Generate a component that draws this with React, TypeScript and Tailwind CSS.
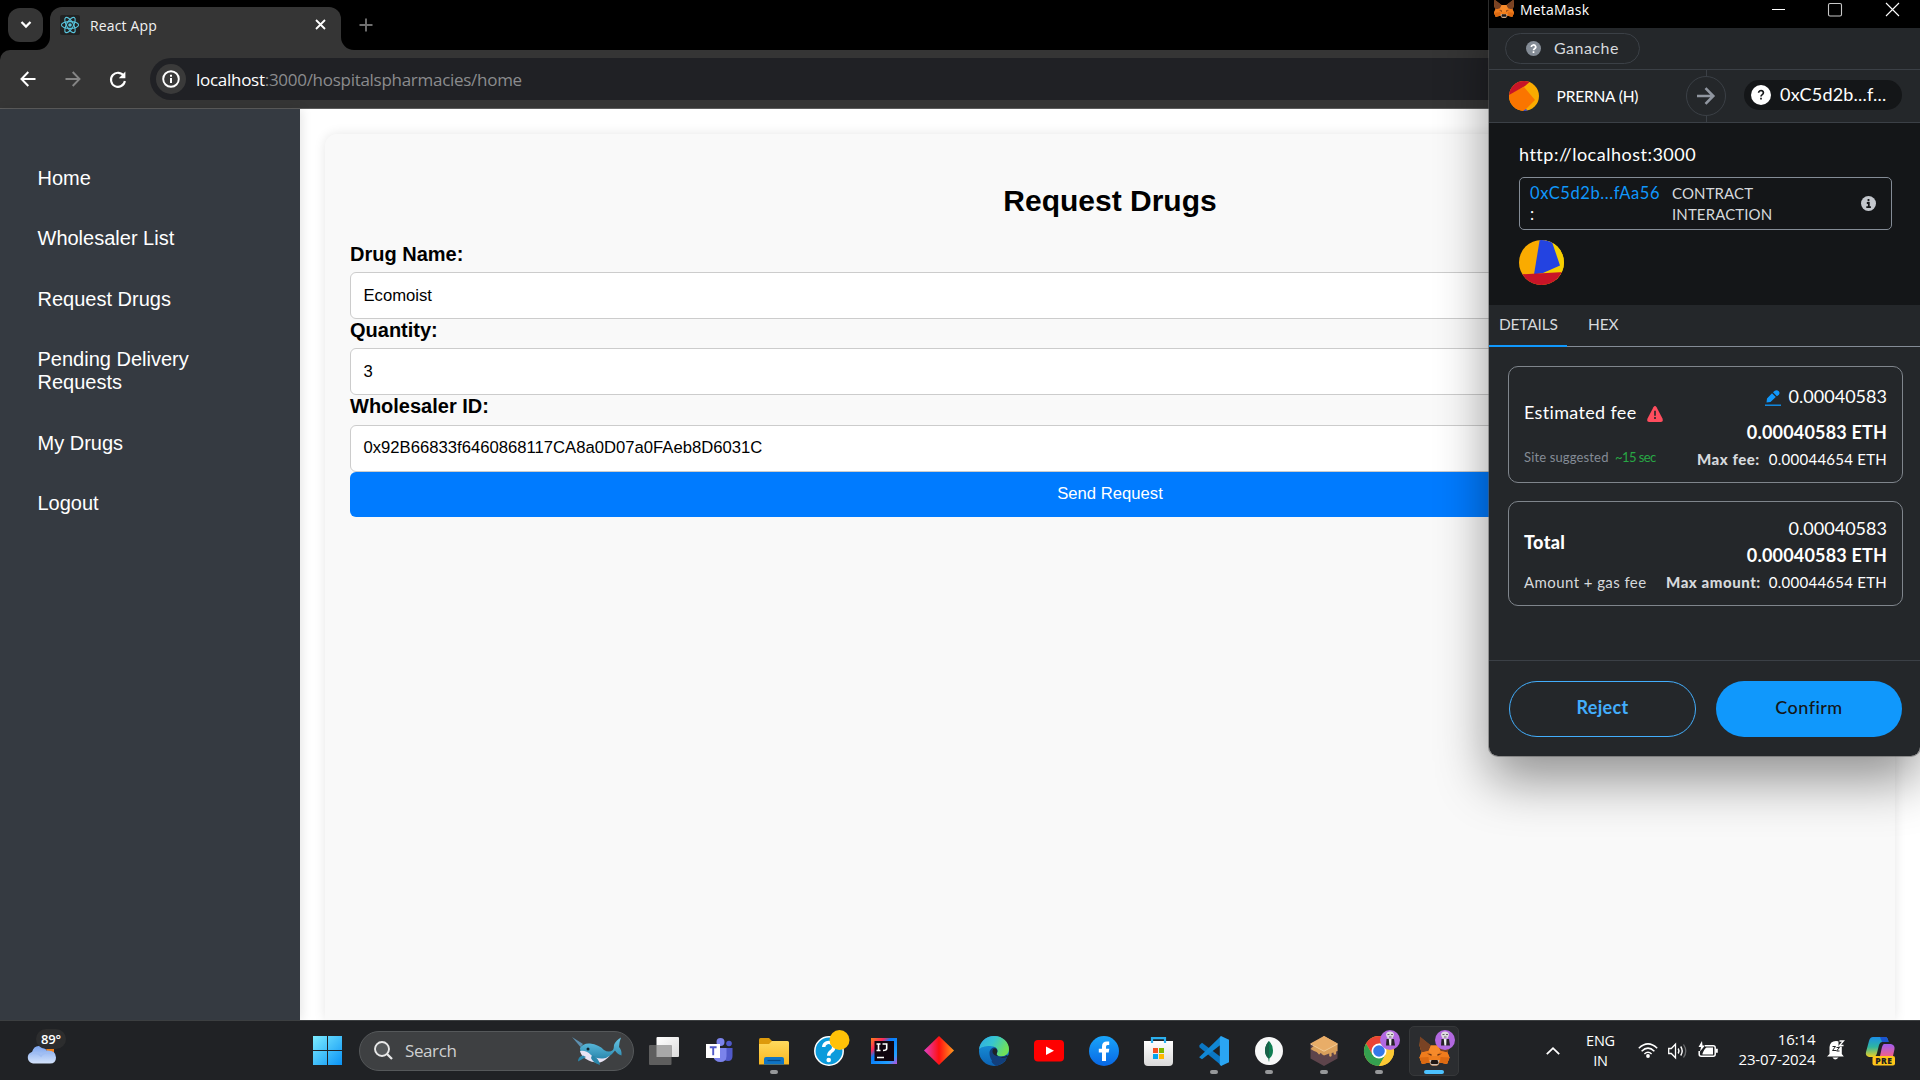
import React from "react";

type Kids = { children?: React.ReactNode };

const UI = "font-['Open_Sans','Noto_Sans',sans-serif]";
const MM = "font-[Lato,'Open_Sans',sans-serif]";

function Icon({ children, w = 30, h = 30, className = "" }: Kids & { w?: number; h?: number; className?: string }) {
  return (
    <svg width={w} height={h} viewBox={`0 0 ${w} ${h}`} className={`shrink-0 overflow-visible ${className}`} fill="none">
      {children}
    </svg>
  );
}

/* ---------- Browser chrome ---------- */

function TabStrip() {
  return (
    <div className="flex h-[50px] items-start bg-black">
      <div className="mt-2 ml-2 flex h-[34px] w-[35px] items-center justify-center rounded-xl bg-[#353535]">
        <Icon w={12} h={8}>
          <path d="M1.5 1l4.5 4.6L10.500 1" stroke="#fff" strokeWidth="2.2" />
        </Icon>
      </div>
      <div className="relative mt-[7px] ml-[7px] flex h-[43px] w-[291px] items-center rounded-t-[12px] bg-[#353535] pb-[8px] pl-[10px]">
        <Icon w={20} h={20}>
          <rect width="20" height="20" rx="2" fill="#222" />
          <g stroke="#58c4dc" strokeWidth="1.1">
            <ellipse cx="10" cy="10" rx="8.600" ry="3.400" />
            <ellipse cx="10" cy="10" rx="8.600" ry="3.400" transform="rotate(60 10 10)" />
            <ellipse cx="10" cy="10" rx="8.600" ry="3.400" transform="rotate(120 10 10)" />
          </g>
          <circle cx="10" cy="10" r="1.800" fill="#58c4dc" />
        </Icon>
        <span className="mt-[2px] ml-[10px] w-[225px] text-[14px] leading-5 tracking-[0.150px] text-[#f1f1f1]">React App</span>
        <Icon w={11} h={11}>
          <path d="M1 1l9 9M10 1l-9 9" stroke="#fff" strokeWidth="1.8" />
        </Icon>
        <svg className="absolute bottom-0 -left-[13px]" width="13" height="13">
          <path d="M13 0v13H0A13 13 0 0 0 13 0" fill="#353535" />
        </svg>
        <svg className="absolute -right-[13px] bottom-0" width="13" height="13">
          <path d="M0 0v13h13A13 13 0 0 1 0 0" fill="#353535" />
        </svg>
      </div>
      <Icon w={14} h={14} className="mt-[18px] ml-[17.500px]">
        <path d="M7 .5v13M.5 7h13" stroke="#707070" strokeWidth="1.9" />
      </Icon>
    </div>
  );
}

function Toolbar() {
  return (
    <div className="bg-black">
      <div className="flex h-[59px] items-center rounded-tl-[10px] border-b border-[#5c5c5c] bg-[#353535] pl-[19.500px]">
        <Icon w={16} h={16}>
          <path d="M15.500 8H2M8.300 1L1.500 8l6.800 7" stroke="#fff" strokeWidth="2" />
        </Icon>
        <Icon w={16} h={16} className="ml-[29px]">
          <path d="M.5 8H14M7.700 1l6.800 7-6.800 7" stroke="#858585" strokeWidth="1.900" />
        </Icon>
        <Icon w={16} h={17} className="ml-[29px]">
          <path d="M14 5.200A7 7 0 1 0 14.900 10" stroke="#fff" strokeWidth="2.100" />
          <path d="M15.400.6v6.700H8.800z" fill="#fff" />
        </Icon>
        <div className="ml-[24.500px] flex h-[42px] flex-1 items-center rounded-l-full bg-[#202125] pl-[6px]">
          <div className="flex h-[30px] w-[30px] items-center justify-center rounded-full bg-[#3a3a3a]">
            <Icon w={18} h={18}>
              <circle cx="9" cy="9" r="7.800" stroke="#fff" strokeWidth="1.900" />
              <path d="M9 8v5M9 4.800v1.900" stroke="#fff" strokeWidth="2" />
            </Icon>
          </div>
          <span className="mt-[2px] ml-[10px] text-[17px] tracking-[-0.280px] whitespace-nowrap text-[#8b8c8e]">
            <span className="text-white">localhost</span>:3000/hospitalspharmacies/home
          </span>
        </div>
      </div>
    </div>
  );
}

/* ---------- Web page ---------- */

const NAV = ["Home", "Wholesaler List", "Request Drugs", "Pending Delivery Requests", "My Drugs", "Logout"];

function Sidebar() {
  return (
    <nav className="z-10 flex w-[300px] shrink-0 flex-col gap-[37.400px] bg-[#353a41] pt-[58px] pr-[60px] pl-[37.500px] text-[20px] leading-[23px] text-white shadow-[2px_0_10px_rgba(0,0,0,0.1)]">
      {NAV.map((n) => (
        <a key={n}>{n}</a>
      ))}
    </nav>
  );
}

function Field({ label, value, shift }: { label: string; value: string; shift?: boolean }) {
  return (
    <div>
      <div className={`text-[20px] leading-[23px] font-bold ${shift ? "mb-[7px]" : "mb-[6px]"}`}>{label}</div>
      <div className={`flex h-[47px] items-center rounded-[6px] border border-[#ccc] bg-white pl-[12.500px] text-[16.670px] ${shift ? "pb-[2px]" : ""}`}>{value}</div>
    </div>
  );
}

function Page() {
  return (
    <div className="flex flex-1 bg-white font-['Liberation_Sans',Arial,sans-serif] text-black">
      <Sidebar />
      <main className="flex flex-1 pt-[25px] pr-[25px] pl-[25px]">
        <section className="flex-1 rounded-t-[12px] bg-[#f9f9f9] px-[25px] pt-[50px] shadow-[0_0_12px_rgba(0,0,0,0.1)]">
          <h2 className="mb-[25px] text-center text-[30px] leading-[34px] font-bold">Request Drugs</h2>
          <Field label="Drug Name:" value="Ecomoist" />
          <Field label="Quantity:" value="3" />
          <Field label="Wholesaler ID:" value="0x92B66833f6460868117CA8a0D07a0FAeb8D6031C" shift />
          <div className="flex h-[45px] items-center justify-center rounded-[6px] bg-[#007bff] pb-[2px] text-[16.670px] text-white">Send Request</div>
        </section>
      </main>
    </div>
  );
}

/* ---------- MetaMask ---------- */

function FoxShapes() {
  return (
    <>
      <path d="M1 1l10 8h8l10-8 1 8-2 7 2 5-2.500 6.500-7-1.500-2.500 3h-6l-2.500-3-7 1.500L0 21l2-5-2-7z" fill="#ef7f1f" />
      <path d="M.5 0L11.500 9 9 14.500 2 16 0 9z" fill="#7a4324" />
      <path d="M29.500 0L18.500 9l2.500 5.500 7 1.500 2-7z" fill="#7a4324" />
      <path d="M11.500 9h7l2.500 5.500-3 5h-6l-3-5z" fill="#f68a2a" />
      <path d="M2 16l7-1.500 3 5-2.500 6.500-7 1.500L0 21z" fill="#f07c1c" />
      <path d="M28 16l-7-1.500-3 5 2.500 6.500 7 1.500L30 21z" fill="#f07c1c" />
      <path d="M0 21l9-.5.5 5.500-7 1.500zM30 21l-9-.5-.5 5.500 7 1.500z" fill="#dd6a12" />
      <path d="M7.500 17l4.500.6v1.900zM22.500 17l-4.500.6v1.900z" fill="#6b3413" />
      <path d="M10 23.500h10l-1 4.500-2 1h-4l-2-1z" fill="#cdbfb4" />
      <path d="M12 23.500h6l1 3-1 1h-6l-1-1z" fill="#1d1613" />
    </>
  );
}

function FeeBox({ className = "", children }: Kids & { className?: string }) {
  return <div className={`flex justify-between rounded-[10px] border border-[#7f858c] px-[15px] ${className}`}>{children}</div>;
}

function MetaMask() {
  return (
    <div className={`absolute top-0 right-0 flex h-[756px] w-[431px] flex-col overflow-hidden rounded-b-[9px] bg-[#24272a] text-white ${MM}`}>
      <div className={`flex h-7 shrink-0 items-start bg-black ${UI}`}>
        <svg width="20" height="19" viewBox="0 1 30 30" preserveAspectRatio="none" className="ml-[5px]">
          <FoxShapes />
        </svg>
        <span className="ml-[6px] w-[252px] text-[14px] leading-5 tracking-[0.200px]">MetaMask</span>
        <Icon w={13} h={16} className="mt-[2px]">
          <path d="M0 7.500h13" stroke="#fff" strokeWidth="1" />
        </Icon>
        <Icon w={14} h={14} className="mt-[3px] ml-[43px]">
          <rect x=".5" y=".5" width="13" height="12.500" rx="1.500" stroke="#c8c8c8" strokeWidth="1.100" />
        </Icon>
        <Icon w={13} h={13} className="mt-[3px] ml-[44px]">
          <path d="M0 0l13 13M13 0L0 13" stroke="#fff" strokeWidth="1.100" />
        </Icon>
      </div>

      <div className="flex h-[42px] shrink-0 items-start border-b border-[#3b4046] pt-[5px] pl-4">
        <div className="flex h-[31px] w-[135px] items-center rounded-full border border-[#3b4046] pl-5">
          <Icon w={15} h={15}>
            <circle cx="7.500" cy="7.500" r="7.500" fill="#848c96" />
            <path d="M5.300 6a2.200 2 0 1 1 3.300 1.700c-.8.500-1.100.7-1.100 1.500M7.500 10.300v1.700" stroke="#fff" strokeWidth="1.700" />
          </Icon>
          <span className="-mt-[2px] ml-[13px] text-[16px] leading-5 tracking-[0.480px] text-[#d6d9dc]">Ganache</span>
        </div>
      </div>

      <div className="flex h-[53px] shrink-0 border-b border-[#3b4046]">
        <div className="flex w-[197px] items-center pl-5">
          <Icon w={30} h={30}>
            <clipPath id="acct">
              <circle cx="15" cy="15" r="15" />
            </clipPath>
            <g clipPath="url(#acct)">
              <rect width="30" height="30" fill="#faab00" />
              <path d="M-2 14L15 6l11 13-12 12H-4z" fill="#fa7500" />
              <path d="M-2 15V-2h26L16 5z" fill="#c81427" />
              <path d="M14 30l3-2 2 2z" fill="#2343e1" />
            </g>
          </Icon>
          <span className="ml-[17.500px] text-[15.500px] leading-5 tracking-[-0.180px]">PRERNA (H)</span>
        </div>
        <div className="flex w-10 flex-col items-center">
          <div className="h-[7px] w-px bg-[#3b4046]" />
          <div className="flex h-10 w-10 shrink-0 items-center justify-center rounded-full border border-[#3b4046]">
            <Icon w={18} h={18}>
              <path d="M0 9h16M8.500 1.200L16.300 9l-7.800 7.800" stroke="#9096a0" strokeWidth="2.600" />
            </Icon>
          </div>
          <div className="h-[6px] w-px bg-[#3b4046]" />
        </div>
        <div className="mt-[10px] ml-[18px] flex h-[30px] w-[158px] items-center rounded-full bg-[#141618] pl-[7px]">
          <Icon w={20} h={20}>
            <circle cx="10" cy="10" r="10" fill="#fff" />
            <path d="M7.600 7.800a2.400 2.200 0 1 1 3.700 1.800c-.9.600-1.300.900-1.300 1.900M10 12.700v1.900" stroke="#141618" strokeWidth="1.700" />
          </Icon>
          <span className="-mt-[2px] ml-[9px] text-[18px] leading-5 tracking-[0.200px]">0xC5d2b...f...</span>
        </div>
      </div>

      <div className="flex h-[182px] shrink-0 flex-col bg-[#141618] pr-7 pl-[30px]">
        <div className="mt-[19px] text-[18px] leading-6 tracking-[0.500px]">http://localhost:3000</div>
        <div className="mt-[11px] flex h-[53px] items-center rounded-[5px] border border-[#848c96] pr-[15px] pl-[10px] leading-[21px]">
          <div className="w-[142px] text-[16.500px] tracking-[0.580px]">
            <div className="text-[#1098fc]">0xC5d2b...fAa56</div>
            <div>:</div>
          </div>
          <div className="flex-1 text-[15px] tracking-[0.120px] text-[#d6d9dc]">
            CONTRACT
            <br />
            INTERACTION
          </div>
          <Icon w={15} h={15}>
            <circle cx="7.500" cy="7.500" r="7.500" fill="#c3c7cc" />
            <path d="M5.800 7h2v3.600M5.300 11.200h4.600M7.500 3v2.200" stroke="#141618" strokeWidth="1.800" />
          </Icon>
        </div>
        <Icon w={45} h={45} className="mt-[10px]">
          <clipPath id="ctr">
            <circle cx="22.500" cy="22.500" r="22.500" />
          </clipPath>
          <g clipPath="url(#ctr)">
            <rect width="45" height="45" fill="#faab00" />
            <path d="M26 0h19v40H20z" fill="#f5cf00" />
            <path d="M21 -2l10 -2L41 25.500 24 33l-9 1.500z" fill="#2343e1" />
            <path d="M0 34.500L45 32v14H0z" fill="#c81427" />
          </g>
        </Icon>
      </div>

      <div className="flex h-[42px] shrink-0 border-b border-[#848c96] text-[15.500px] leading-[38px] text-[#d6d9dc]">
        <div className="h-[42px] w-[78px] border-b-2 border-[#1098fc] pl-[10px] tracking-[-0.200px]">DETAILS</div>
        <div className="pl-[21px] tracking-[-0.100px]">HEX</div>
      </div>

      <div className="flex flex-1 flex-col px-[19px] pt-[19px] pr-[17px]">
        <FeeBox className="h-[117px]">
          <div>
            <div className="mt-[33px] flex items-center">
              <span className="text-[18px] leading-6 tracking-[0.340px]">Estimated fee</span>
              <Icon w={16} h={16} className="mt-[3px] ml-[10px]">
                <path d="M6.400 1.200Q8-1 9.600 1.200l6 11.500Q16.500 16 13.600 16H2.400Q-.5 16 .4 12.700z" fill="#ff4d5e" />
                <path d="M8 4.800v5M8 11v2" stroke="#24272a" strokeWidth="1.600" />
              </Icon>
            </div>
            <div className="mt-[23px] text-[13px] leading-5 text-[#848c96]">
              <span className="tracking-[0.150px]">Site suggested</span> <span className="ml-[3px] tracking-[-0.550px] text-[#28a745]">~15 sec</span>
            </div>
          </div>
          <div className="flex flex-col items-end">
            <div className="mt-[17px] flex items-center">
              <Icon w={16} h={16} className="mt-[4px] mr-[8px]">
                <path d="M1.500 12.500l.5-4L7 3.200l3.800 3.900-5.300 5zM8 2.300Q11-1 13.800 1.200 16 4 11.900 6.300z" fill="#1098fc" />
                <path d="M0 15.200h16" stroke="#1098fc" strokeWidth="1.300" />
              </Icon>
              <span className="text-[18px] leading-6 tracking-[0.020px]">0.00040583</span>
            </div>
            <div className="mt-[12px] text-[18px] leading-6 font-bold tracking-[0.180px]">0.00040583 ETH</div>
            <div className="mt-[4px] text-[15px] leading-[22px]">
              <b className="mr-[9px] font-black tracking-[0.550px] text-[#d6d9dc]">Max fee:</b>
              <span className="tracking-[0.250px]">0.00044654 ETH</span>
            </div>
          </div>
        </FeeBox>
        <FeeBox className="mt-[18px] h-[105px]">
          <div>
            <div className="mt-[28px] text-[18px] leading-6 font-black tracking-[0.350px]">Total</div>
            <div className="mt-[17px] text-[15px] leading-[22px] tracking-[0.420px] text-[#d6d9dc]">Amount + gas fee</div>
          </div>
          <div className="flex flex-col items-end">
            <div className="mt-[14px] text-[18px] leading-6 tracking-[0.020px]">0.00040583</div>
            <div className="mt-[3px] text-[18px] leading-6 font-bold tracking-[0.180px]">0.00040583 ETH</div>
            <div className="mt-[4px] text-[15px] leading-[22px]">
              <b className="mr-[8px] font-black tracking-[0.550px] text-[#d6d9dc]">Max amount:</b>
              <span className="tracking-[0.250px]">0.00044654 ETH</span>
            </div>
          </div>
        </FeeBox>
      </div>

      <div className="flex h-24 shrink-0 gap-5 border-t border-[#3b4046] pt-5 pl-5 text-[18px]">
        <div className="flex h-14 w-[187px] items-center justify-center rounded-full border border-[#43aefc] pb-[3px] font-bold tracking-[0.350px] text-[#43aefc]">Reject</div>
        <div className="flex h-14 w-[186px] items-center justify-center rounded-full bg-[#1098fc] pb-[4px] font-medium tracking-[0.450px] text-[#141618]">Confirm</div>
      </div>
    </div>
  );
}

/* ---------- Taskbar ---------- */

function Slot({ children, dot, active }: Kids & { dot?: boolean; active?: boolean }) {
  return (
    <div className="relative flex h-full w-[55px] shrink-0 items-center justify-center">
      <div className={active ? "flex h-[50px] w-[50px] items-center justify-center rounded-[5px] border border-[#36383a] bg-[#2b2d30]" : ""}>{children}</div>
      {dot && <div className="absolute bottom-[6px] left-1/2 h-1 w-2 -translate-x-1/2 rounded-full bg-[#96989a]" />}
      {active && <div className="absolute bottom-[6px] left-1/2 h-1 w-5 -translate-x-1/2 rounded-full bg-[#4cc2ff]" />}
    </div>
  );
}

function Avatar() {
  return (
    <g>
      <circle cx="26" cy="4" r="10" fill="#b268e0" />
      <path d="M22 -1q0-3.500 4-3.500T30-1l-1.500 3.500h-5z" fill="#dedbe0" />
      <path d="M22.500 3h7.500l1 6.500h-9z" fill="#262228" />
      <path d="M24.800 3h2.700l-.3 6.500h-1.800z" fill="#f0f0f0" />
      <path d="M23.500-1.500H25.500M27-1.500h2M25 1h2.500" stroke="#666" strokeWidth="1" />
    </g>
  );
}

function TaskIcons() {
  return (
    <>
      <Slot>
        <Icon>
          <defs>
            <linearGradient id="tv" x1="0" y1="0" x2="1" y2="1">
              <stop stopColor="#fff" />
              <stop offset="1" stopColor="#dcdcdc" />
            </linearGradient>
          </defs>
          <rect x="7.500" y="1" width="22.500" height="20" rx="1" fill="url(#tv)" />
          <rect x="0" y="9" width="22.500" height="20" rx="1" fill="#5e5e5e" />
          <rect x="7.500" y="9" width="15" height="12" fill="#a8a8a8" />
        </Icon>
      </Slot>
      <Slot>
        <Icon>
          <circle cx="16.500" cy="6" r="4" fill="#7b83eb" />
          <circle cx="25" cy="7.500" r="2.800" fill="#5059c9" />
          <path d="M20 12h8.500v8q0 5-4.500 5t-5-4z" fill="#5059c9" />
          <path d="M9 12h13.500v8q0 6-6 6T9 20z" fill="#7b83eb" />
          <rect x="2" y="8" width="14" height="14" fill="#fff" />
          <path d="M5.800 11.300h6.800M9.200 11.300v8" stroke="#5059c9" strokeWidth="1.900" />
        </Icon>
      </Slot>
      <Slot dot>
        <Icon>
          <defs>
            <linearGradient id="fo" x1="0" y1="0" x2="0" y2="1">
              <stop stopColor="#ffd95e" />
              <stop offset="1" stopColor="#f9b820" />
            </linearGradient>
          </defs>
          <path d="M0 3.500Q0 2 1.500 2H10l3 3v4H0z" fill="#dd9a0c" />
          <path d="M0 8h10l3-3h15.500Q30 5 30 6.500V28.500H0z" fill="url(#fo)" />
          <path d="M5 28.500V23q0-2 2-2h16q2 0 2 2v5.500z" fill="#0f74c4" />
          <path d="M8.500 24.500h13" stroke="#064a86" strokeWidth="1.200" />
        </Icon>
      </Slot>
      <Slot>
        <Icon>
          <circle cx="15" cy="15" r="14.200" fill="#0b9bdc" stroke="#fff" strokeWidth="1.500" />
          <path d="M9.700 11a5 4.800 0 1 1 7.800 4.200c-2 1.400-2.800 2-2.800 4.600" stroke="#fff" strokeWidth="3.400" />
          <circle cx="14.700" cy="24" r="2.300" fill="#fff" />
          <circle cx="25.500" cy="4" r="10" fill="#ffc107" />
        </Icon>
      </Slot>
      <Slot>
        <Icon>
          <defs>
            <linearGradient id="ij" x1="0" y1="0" x2="1" y2="1">
              <stop stopColor="#fc801d" />
              <stop offset=".25" stopColor="#fe2857" />
              <stop offset=".4" stopColor="#087cfa" />
              <stop offset=".8" stopColor="#21a0ff" />
              <stop offset="1" stopColor="#c44bd8" />
            </linearGradient>
          </defs>
          <rect x="2" y="2" width="26" height="26" fill="url(#ij)" />
          <rect x="5.500" y="5" width="19.500" height="20" fill="#10040f" />
          <path d="M7.500 8h4M9.500 8v6.500M7.500 14.500h4M13.500 8h4.200v4.500q0 2-3.700 2M8 21.500h7" stroke="#fff" strokeWidth="1.600" />
        </Icon>
      </Slot>
      <Slot>
        <Icon>
          <defs>
            <linearGradient id="di" x1="0" y1="0" x2="1" y2="0">
              <stop stopColor="#e040c8" />
              <stop offset=".5" stopColor="#ff1010" />
              <stop offset="1" stopColor="#ff9a1e" />
            </linearGradient>
          </defs>
          <path d="M15 0l15 14.500L15 29 0 14.500z" fill="url(#di)" />
        </Icon>
      </Slot>
      <Slot>
        <Icon>
          <defs>
            <linearGradient id="e1" x1="0" y1="0" x2="1" y2=".4">
              <stop stopColor="#2fa9e8" />
              <stop offset=".5" stopColor="#37c6d0" />
              <stop offset="1" stopColor="#6fe05a" />
            </linearGradient>
            <linearGradient id="e2" x1="0" y1="0" x2="0" y2="1">
              <stop stopColor="#1b9de2" />
              <stop offset="1" stopColor="#0c63b5" />
            </linearGradient>
          </defs>
          <circle cx="15" cy="15" r="15" fill="url(#e2)" />
          <path d="M0 13.500C1 5 8 0 15 0c9 0 15 6.500 15 13 0 5-3.500 7.500-8 7.500-3.500 0-5.200-1.500-4.200-3.200 2.500-4-2-7.500-7-7.300C6 10.200 1.500 11 0 13.500z" fill="url(#e1)" />
          <path d="M10.500 17c0-4 3.500-6 5.500-5.500 2.500.7 3 3.500 1.800 5.800-1 1.700.7 3.200 4.200 3.200 2.500 0 4.500-.7 6-2l.7 2.500C26 26 20 28 17 27c-4-1-6.500-5-6.500-10z" fill="#123f7c" />
          <path d="M15.500 12.500c2.500 0 3.500 2.500 2.300 4.800-.6 1 0 2.200 1.700 2.800-3.500 0-6-2-6-4.500 0-1.800.8-3 2-3.100z" fill="#1e2226" />
          <path d="M30.500 18.500c-3 2.800-9 3.300-12 1.500l11 5z" fill="#202225" />
          <path d="M18 20.500q6 2.500 10.700 0Q26 27 18 30q-5-2-5.500-5z" fill="#123f7c" />
        </Icon>
      </Slot>
      <Slot>
        <Icon>
          <rect x="0" y="4" width="30" height="21.500" rx="4" fill="#f00" />
          <path d="M12 10.500v8.500l8-4.250z" fill="#fff" />
        </Icon>
      </Slot>
      <Slot>
        <Icon>
          <defs>
            <linearGradient id="fb" x1="0" y1="0" x2="0" y2="1">
              <stop stopColor="#19a5fb" />
              <stop offset="1" stopColor="#0867e4" />
            </linearGradient>
          </defs>
          <circle cx="15" cy="15" r="15" fill="url(#fb)" />
          <path d="M13 25V16.500H9.800V12.800H13v-2.300Q13 5.500 18 5.500h2.200V9H18.500Q17 9 17 10.700v2.100h3.300l-.6 3.700H17V25z" fill="#fff" />
        </Icon>
      </Slot>
      <Slot>
        <Icon>
          <defs>
            <linearGradient id="st" x1="0" y1="0" x2="0" y2="1">
              <stop stopColor="#fff" />
              <stop offset="1" stopColor="#d9d9d9" />
            </linearGradient>
          </defs>
          <path d="M0 5h29v21q0 4-4 4H4q-4 0-4-4z" fill="url(#st)" />
          <path d="M8 7V2.200h13V7" stroke="#2bb0ee" strokeWidth="2.200" />
          <path d="M9 12h5v5H9z" fill="#f25022" />
          <path d="M15 12h5v5h-5z" fill="#7fba00" />
          <path d="M9 18h5v5H9z" fill="#00a4ef" />
          <path d="M15 18h5v5h-5z" fill="#ffb900" />
        </Icon>
      </Slot>
      <Slot dot>
        <Icon>
          <path d="M.4 9.200L3 6.800 23 22v8L.4 11.200z" fill="#0b77c4" />
          <path d="M.4 21L22 0v8.500L3 23.300.4 21.500z" fill="#1187d4" />
          <path d="M22 0l8 3.700v22.600L22 30l-1.200-1.500V1.800z" fill="#2aa5f2" />
        </Icon>
      </Slot>
      <Slot dot>
        <Icon>
          <circle cx="15" cy="15" r="14" fill="#f7f8f8" />
          <path d="M15 5q4 4 4 9.500 0 5-3.600 8l-.2 3h-.4l-.2-3Q11 19.500 11 14.500 11 9 15 5z" fill="#0f7d52" />
          <path d="M15 5v20.500l-.4-3Q11 19.500 11 14.500 11 9 15 5z" fill="#1a6149" />
        </Icon>
      </Slot>
      <Slot dot>
        <Icon>
          <path d="M15 0l13.500 7.500v15L15 30 1.500 22.500v-15z" fill="#5d444b" />
          <path
            d="M15 0l13.500 7.500V15l-1.500.5v2.500q-1.200 1.500-2.400 0v-1.500l-2 .5v3q-1.200 1.500-2.400 0v-2.500L15 19.500 12.500 18v-.5q-1-1-1.600.5-1 1-1.800-.5l-1.500-1.500L5 15 1.500 13z"
            fill="#d9a05c"
          />
          <path d="M15 0l13.500 7.500L15 15 1.500 7.500z" fill="#e8ad68" />
          <path d="M1.500 8L15 15.200 28.500 8" stroke="#f3cb95" strokeWidth="1" />
        </Icon>
      </Slot>
      <Slot dot>
        <Icon>
          <circle cx="15" cy="15" r="15" fill="#fcc934" />
          <path d="M2 7.500A15 15 0 0 1 28 7.500H15L8.500 18.700z" fill="#ea4335" />
          <path d="M2 7.500A15 15 0 0 0 15 30l6.500-11.200-13-.1z" fill="#34a04f" />
          <path d="M28 7.500H15l6.500 11.300L15 30A15 15 0 0 0 28 7.500z" fill="#fcc934" />
          <circle cx="15" cy="15" r="7.500" fill="#fff" />
          <circle cx="15" cy="15" r="5.800" fill="#3478e8" />
          <Avatar />
        </Icon>
      </Slot>
      <Slot active>
        <Icon>
          <g transform="translate(.5 .5)">
            <FoxShapes />
          </g>
          <Avatar />
        </Icon>
      </Slot>
    </>
  );
}

function Taskbar() {
  return (
    <div className={`flex h-[60px] shrink-0 items-center border-t border-[#3c3f41] bg-[#202225] text-white ${UI}`}>
      <div className="relative h-[59px] w-[313px] shrink-0">
        <Icon w={30} h={19} className="absolute top-[24px] left-[26px]">
          <defs>
            <linearGradient id="cl" x1="0" y1="0" x2="0" y2="1">
              <stop stopColor="#7ba4ee" />
              <stop offset="1" stopColor="#d4e3fb" />
            </linearGradient>
          </defs>
          <path d="M20 4h8v5h-6z" fill="#f0801c" />
          <path d="M7 18.500a6.500 6 0 0 1-1-11.500Q8 0 14 1q5 1 6.500 4.500Q30 5 30 12.500q0 6-6 6z" fill="url(#cl)" />
          <path d="M4 9q7-3 11 2 4-5 10-3" stroke="#9fbdf2" strokeWidth="1.500" />
        </Icon>
        <div className="absolute top-[8px] left-[36px] flex h-5 w-[30px] items-center justify-center rounded-full bg-[#2c2d2e] text-[13px] leading-5 font-semibold tracking-[-0.100px]">89°</div>
      </div>
      <Icon w={29} h={29}>
        <defs>
          <linearGradient id="wi" x1="0" y1="0" x2="29" y2="29" gradientUnits="userSpaceOnUse">
            <stop stopColor="#7cecff" />
            <stop offset="1" stopColor="#0a93f5" />
          </linearGradient>
        </defs>
        <path d="M0 0h14v14H0zM15 0h14v14H15zM0 15h14v14H0zM15 15h14v14H15z" fill="url(#wi)" />
      </Icon>
      <div className="ml-[17px] flex h-10 w-[275px] shrink-0 items-center rounded-full border border-[#55585a] bg-[#3e4042] pl-[14px]">
        <Icon w={19} h={19}>
          <circle cx="8" cy="8" r="7" stroke="#e8e8e8" strokeWidth="1.900" fill="#55585a" />
          <path d="M13 13l5 5" stroke="#e8e8e8" strokeWidth="2.300" />
        </Icon>
        <span className="ml-[12px] w-[167px] text-[17px] leading-6 tracking-[-0.400px] text-[#cfd0d1]">Search</span>
        <Icon w={50} h={28}>
          <defs>
            <linearGradient id="nw" x1="0" y1="0" x2="0" y2="1">
              <stop stopColor="#68c8e8" />
              <stop offset="1" stopColor="#2581a8" />
            </linearGradient>
          </defs>
          <path d="M0 0l11 7-2.500 3z" fill="#5d90b0" />
          <path d="M8 11q3-5 10-4.500 9 1 14 6.500 5 3 9 0 1-2 1-5 2-5 7-7.500-2 5-2 9.500 3 3 2.500 8.500-4-1-6.500-5-5 7-14 10-9 2-16-4-5-3-5-8.500z" fill="url(#nw)" />
          <path d="M8 14q6-1 11 4 5 4 12 3.500 4-.5 7-3Q33 24 28 25.500 20 26 14 22q-5-3-6-8z" fill="#e9e3f3" />
          <path d="M20 18q7 3 8 10-7-2-9-7zM14 20l-8 4.500q0-5 5-6z" fill="#2b86aa" />
          <circle cx="16" cy="12" r="1.500" fill="#12222c" />
        </Icon>
      </div>
      <div className="ml-[2.500px] flex h-full shrink-0">
        <TaskIcons />
      </div>
      <Icon w={14} h={8} className="ml-[84px]">
        <path d="M.8 7.200L7 1.200l6.200 6" stroke="#fff" strokeWidth="1.800" />
      </Icon>
      <div className="ml-[24px] w-[34px] shrink-0 text-center text-[14.500px] leading-5 tracking-[-0.200px]">
        ENG
        <br />
        IN
      </div>
      <Icon w={20} h={15} className="ml-[20px]">
        <path d="M.8 5.200Q10-3.400 19.200 5.200M3.600 8.200Q10 2 16.400 8.200M6.400 11Q10 7.600 13.600 11" stroke="#fff" strokeWidth="1.500" />
        <circle cx="10" cy="13" r="1.900" fill="#fff" />
      </Icon>
      <Icon w={20} h={16} className="ml-[10px]">
        <path d="M.7 5.500h2.600L7.500 1.200v13.600L3.300 10.500H.7z" stroke="#fff" strokeWidth="1.300" />
        <path d="M10.200 5.500q1.600 2.500 0 5M12.700 3.500q3 4.500 0 9" stroke="#fff" strokeWidth="1.400" />
        <path d="M15.500 1.500q4.500 6.500 0 13" stroke="#6c6e70" strokeWidth="1.300" />
      </Icon>
      <Icon w={20} h={17} className="mb-[2px] ml-[10px]">
        <path d="M7 4.700h8.200q2 0 2 2v6.600q0 2-2 2H3.200q-2 0-2-2V10" stroke="#fff" strokeWidth="1.500" />
        <path d="M4.500 12.500q2-5 4-6H15v7H4.500zM18 7.700h1.800v4H18z" fill="#fff" />
        <path d="M4 0L.5 6H3L2 10.500 7 4.500H4.500z" fill="#fff" />
      </Icon>
      <div className="mb-[4px] ml-[18px] w-20 shrink-0 text-right text-[15px] leading-5 tracking-[-0.120px] whitespace-nowrap">
        16:14
        <br />
        23-07-2024
      </div>
      <Icon w={18} h={19} className="mb-[1px] ml-[11px]">
        <path d="M2.500 13V6Q3 0 9 0q5 0 5.800 5v8l2 2.500H0z" fill="#fff" />
        <path d="M5.500 16.500q2.500 4 6 0z" fill="#fff" />
        <path d="M5.500 5.500h3l-3 4h3.500M9.500 6.500h3L9.500 10h3" stroke="#202225" strokeWidth="1" />
        <rect x="11.500" y="-1.500" width="7" height="7" fill="#202225" />
        <path d="M12.500 0h4l-4 4.500h4" stroke="#fff" strokeWidth="1.300" />
      </Icon>
      <Icon w={30} h={29} className="ml-[21px]">
        <defs>
          <linearGradient id="c1" x1="0" y1="0" x2="0" y2="1">
            <stop stopColor="#1b8fe8" />
            <stop offset=".5" stopColor="#2fb5a0" />
            <stop offset="1" stopColor="#f0cf20" />
          </linearGradient>
          <linearGradient id="c2" x1="0" y1="0" x2="0" y2="1">
            <stop stopColor="#a05cf0" />
            <stop offset="1" stopColor="#f0608a" />
          </linearGradient>
        </defs>
        <path d="M7 1h13q2 1 2.500 5H16q-2 0-3 3l-2 8q-1 4-4 4H3q-4-1-3-5l3-11q1-4 4-4z" fill="url(#c1)" />
        <path d="M14 1h6q2 1 2.500 5H16z" fill="#1b55d0" />
        <path d="M18 8h7q4 1 3.500 5L27 20H14l2-9q1-3 2-3z" fill="url(#c2)" />
        <rect x="6.500" y="20" width="22.500" height="9.500" rx="2" fill="#ffc61a" />
        <text x="17.800" y="27.800" textAnchor="middle" fontSize="8.500" fontWeight="800" letterSpacing=".4" fill="#202020" fontFamily="Open Sans">
          PRE
        </text>
      </Icon>
    </div>
  );
}

export default function App() {
  return (
    <div className={`relative flex h-[1080px] w-[1920px] flex-col overflow-hidden bg-white ${UI}`}>
      <div className="relative flex flex-1 flex-col overflow-hidden">
        <TabStrip />
        <Toolbar />
        <Page />
        <div className="pointer-events-none absolute top-0 right-0 h-[756px] w-[431px] rounded-b-[9px] shadow-[0_0_0_1px_rgba(90,90,90,0.5),0_24px_52px_rgba(0,0,0,0.42)]" />
      </div>
      <Taskbar />
      <MetaMask />
    </div>
  );
}
